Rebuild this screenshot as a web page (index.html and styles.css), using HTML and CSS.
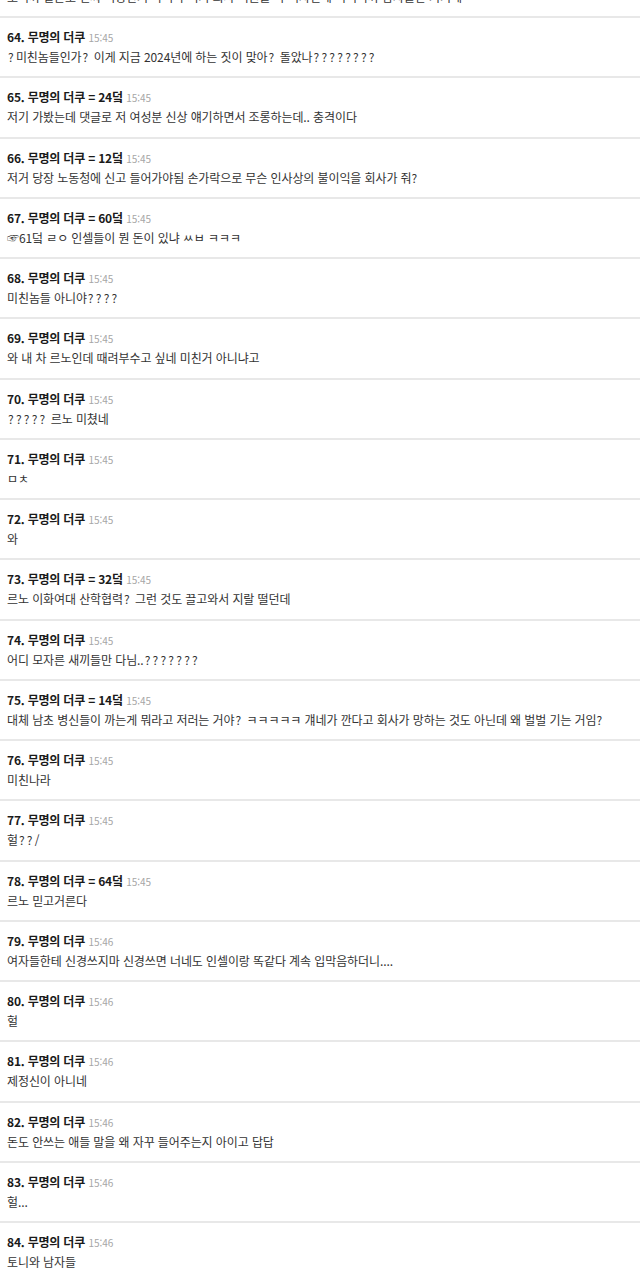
FILE: index.html
```html
<!DOCTYPE html>
<html lang="ko">
<head>
<meta charset="utf-8">
<title>댓글</title>
<link rel="stylesheet" href="styles.css">
</head>
<body>
<div class="list">
  <div class="row">
    <div class="head"><span class="name">63. 무명의 더쿠</span> <span class="time">15:45</span></div>
    <div class="text">보니까 일본도 진짜 이상한거 아니야 여기 회사 직원들 다 여자인데 이러니까 남자들만 거기에</div>
  </div>
  <div class="row">
    <div class="head"><span class="name">64. 무명의 더쿠</span> <span class="time">15:45</span></div>
    <div class="text"><span class="q">?</span>미친놈들인가<span class="q">?</span> 이게 지금 2024년에 하는 짓이 맞아<span class="q">?</span> 돌았나<span class="q">????????</span></div>
  </div>
  <div class="row">
    <div class="head"><span class="name">65. 무명의 더쿠 = 24덬</span> <span class="time">15:45</span></div>
    <div class="text">저기 가봤는데 댓글로 저 여성분 신상 얘기하면서 조롱하는데.. 충격이다</div>
  </div>
  <div class="row">
    <div class="head"><span class="name">66. 무명의 더쿠 = 12덬</span> <span class="time">15:45</span></div>
    <div class="text">저거 당장 노동청에 신고 들어가야됨 손가락으로 무슨 인사상의 불이익을 회사가 줘?</div>
  </div>
  <div class="row">
    <div class="head"><span class="name">67. 무명의 더쿠 = 60덬</span> <span class="time">15:45</span></div>
    <div class="text">☞61덬 ㄹㅇ 인셀들이 뭔 돈이 있냐 ㅆㅂ ㅋㅋㅋ</div>
  </div>
  <div class="row">
    <div class="head"><span class="name">68. 무명의 더쿠</span> <span class="time">15:45</span></div>
    <div class="text">미친놈들 아니야<span class="q">????</span></div>
  </div>
  <div class="row">
    <div class="head"><span class="name">69. 무명의 더쿠</span> <span class="time">15:45</span></div>
    <div class="text">와 내 차 르노인데 때려부수고 싶네 미친거 아니냐고</div>
  </div>
  <div class="row">
    <div class="head"><span class="name">70. 무명의 더쿠</span> <span class="time">15:45</span></div>
    <div class="text"><span class="q">?????</span> 르노 미쳤네</div>
  </div>
  <div class="row">
    <div class="head"><span class="name">71. 무명의 더쿠</span> <span class="time">15:45</span></div>
    <div class="text">ㅁㅊ</div>
  </div>
  <div class="row">
    <div class="head"><span class="name">72. 무명의 더쿠</span> <span class="time">15:45</span></div>
    <div class="text">와</div>
  </div>
  <div class="row">
    <div class="head"><span class="name">73. 무명의 더쿠 = 32덬</span> <span class="time">15:45</span></div>
    <div class="text">르노 이화여대 산학협력<span class="q">?</span> 그런 것도 끌고와서 지랄 떨던데</div>
  </div>
  <div class="row">
    <div class="head"><span class="name">74. 무명의 더쿠</span> <span class="time">15:45</span></div>
    <div class="text">어디 모자른 새끼들만 다님..<span class="q">???????</span></div>
  </div>
  <div class="row">
    <div class="head"><span class="name">75. 무명의 더쿠 = 14덬</span> <span class="time">15:45</span></div>
    <div class="text">대체 남초 병신들이 까는게 뭐라고 저러는 거야<span class="q">?</span> ㅋㅋㅋㅋㅋ 걔네가 깐다고 회사가 망하는 것도 아닌데 왜 벌벌 기는 거임?</div>
  </div>
  <div class="row">
    <div class="head"><span class="name">76. 무명의 더쿠</span> <span class="time">15:45</span></div>
    <div class="text">미친나라</div>
  </div>
  <div class="row">
    <div class="head"><span class="name">77. 무명의 더쿠</span> <span class="time">15:45</span></div>
    <div class="text">헐<span class="q">??</span>/</div>
  </div>
  <div class="row">
    <div class="head"><span class="name">78. 무명의 더쿠 = 64덬</span> <span class="time">15:45</span></div>
    <div class="text">르노 믿고거른다</div>
  </div>
  <div class="row">
    <div class="head"><span class="name">79. 무명의 더쿠</span> <span class="time">15:46</span></div>
    <div class="text">여자들한테 신경쓰지마 신경쓰면 너네도 인셀이랑 똑같다 계속 입막음하더니....</div>
  </div>
  <div class="row">
    <div class="head"><span class="name">80. 무명의 더쿠</span> <span class="time">15:46</span></div>
    <div class="text">헐</div>
  </div>
  <div class="row">
    <div class="head"><span class="name">81. 무명의 더쿠</span> <span class="time">15:46</span></div>
    <div class="text">제정신이 아니네</div>
  </div>
  <div class="row">
    <div class="head"><span class="name">82. 무명의 더쿠</span> <span class="time">15:46</span></div>
    <div class="text">돈도 안쓰는 애들 말을 왜 자꾸 들어주는지 아이고 답답</div>
  </div>
  <div class="row">
    <div class="head"><span class="name">83. 무명의 더쿠</span> <span class="time">15:46</span></div>
    <div class="text">헐...</div>
  </div>
  <div class="row">
    <div class="head"><span class="name">84. 무명의 더쿠</span> <span class="time">15:46</span></div>
    <div class="text">토니와 남자들</div>
  </div>
</div>
</body>
</html>
```

FILE: styles.css
```css
html, body {
  margin: 0;
  padding: 0;
  background: #fff;
}
body {
  font-family: "Noto Sans CJK KR", "Noto Sans", sans-serif;
  color: #333;
  overflow: hidden;
}
.list {
  margin-top: -42.25px;
}
.row {
  padding: 9px 7px 9.25px;
  border-bottom: 2px solid #e8e8e8;
  height: 40px;
}
.head {
  height: 20px;
  line-height: 20px;
  font-size: 12px;
  white-space: nowrap;
}
.name {
  font-weight: bold;
  color: #1a1a1a;
  letter-spacing: -0.2px;
}
.time {
  font-size: 10px;
  color: #a6a6a6;
}
.text {
  height: 20px;
  line-height: 20px;
  font-size: 12px;
  color: #333;
  white-space: nowrap;
  letter-spacing: -0.1px;
}
.q {
  letter-spacing: 2.2px;
  margin-left: 1px;
}
```
